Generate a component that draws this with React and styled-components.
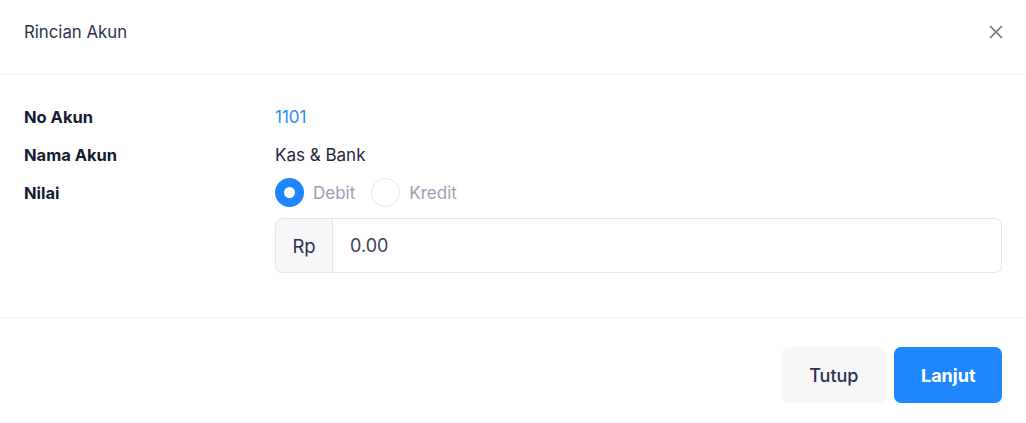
import { useState } from 'react';
import styled, { createGlobalStyle } from 'styled-components';

const GlobalStyle = createGlobalStyle`
  * { box-sizing: border-box; }
  body {
    margin: 0;
    background: #fff;
    font-family: Inter, "Noto Sans", "Liberation Sans", sans-serif;
  }
`;

function App() {
  const [type, setType] = useState('debit');
  const [amount, setAmount] = useState('0.00');

  return (
    <>
      <GlobalStyle />
      <Modal>
        <Header>
          <Title>Rincian Akun</Title>
          <CloseButton aria-label="Tutup">
            <svg width="14" height="14" viewBox="0 0 14 14" fill="none">
              <path d="M1.5 1.5l11 11M12.5 1.5l-11 11" stroke="#6b6f78" strokeWidth="1.5" strokeLinecap="round" />
            </svg>
          </CloseButton>
        </Header>

        <Body>
          <Label>No Akun</Label>
          <Value $link>1101</Value>

          <Label>Nama Akun</Label>
          <Value>Kas &amp; Bank</Value>

          <Label>Nilai</Label>
          <div>
            <RadioGroup>
              <RadioOption onClick={() => setType('debit')}>
                <RadioDot $checked={type === 'debit'} />
                Debit
              </RadioOption>
              <RadioOption onClick={() => setType('kredit')}>
                <RadioDot $checked={type === 'kredit'} />
                Kredit
              </RadioOption>
            </RadioGroup>
            <InputGroup>
              <Addon>Rp</Addon>
              <AmountInput value={amount} onChange={(e) => setAmount(e.target.value)} />
            </InputGroup>
          </div>
        </Body>

        <Footer>
          <Button>Tutup</Button>
          <Button $primary>Lanjut</Button>
        </Footer>
      </Modal>
    </>
  );
}

export default App;

const Modal = styled.div`
  width: 100%;
  background: #fff;
`;

const Header = styled.div`
  display: flex;
  align-items: center;
  justify-content: space-between;
  padding: 22px 23px 32px 24px;
  border-bottom: 1px solid #eef0f3;
`;

const Title = styled.h2`
  margin: 0;
  font-size: 16.8px;
  line-height: 20px;
  font-weight: 400;
  color: #2b3352;
`;

const CloseButton = styled.button`
  display: flex;
  padding: 0;
  border: none;
  background: none;
  cursor: pointer;
`;

const Body = styled.div`
  display: grid;
  grid-template-columns: 251px 1fr;
  row-gap: 16px;
  padding: 31px 24px 44px 24px;
  border-bottom: 1px solid #eef0f3;
`;

const Label = styled.div`
  font-size: 16.5px;
  line-height: 22px;
  font-weight: 700;
  color: #141b34;
`;

const Value = styled.div`
  font-size: 17px;
  line-height: 22px;
  color: ${(p) => (p.$link ? '#2f8af5' : '#1f2640')};
`;

const RadioGroup = styled.div`
  display: flex;
  align-items: center;
  gap: 16px;
  margin-top: -4px;
`;

const RadioOption = styled.label`
  display: flex;
  align-items: center;
  gap: 9px;
  font-size: 17px;
  color: #9aa0b4;
  cursor: pointer;
`;

const RadioDot = styled.span`
  width: 29px;
  height: 29px;
  border-radius: 50%;
  background: #fff;
  border: ${(p) => (p.$checked ? '9px solid #1f87fd' : '1.5px solid #e6e8ee')};
`;

const InputGroup = styled.div`
  display: flex;
  margin-top: 11px;
  height: 55px;
`;

const Addon = styled.div`
  display: flex;
  align-items: center;
  justify-content: center;
  width: 58px;
  background: #f7f7f9;
  border: 1.5px solid #e3e6ee;
  border-radius: 7px 0 0 7px;
  font-size: 18.5px;
  color: #2b3150;
`;

const AmountInput = styled.input`
  flex: 1;
  min-width: 0;
  border: 1.5px solid #e3e6ee;
  border-left: none;
  border-radius: 0 7px 7px 0;
  padding: 0 17px;
  font-family: inherit;
  font-size: 18px;
  color: #3a4157;
  outline: none;
`;

const Footer = styled.div`
  display: flex;
  justify-content: flex-end;
  gap: 9px;
  padding: 29px 24px 20px;
`;

const Button = styled.button`
  height: 56px;
  padding: 0 ${(p) => (p.$primary ? '26.5px' : '27px')};
  border: none;
  border-radius: 7px;
  font-family: inherit;
  font-size: 18px;
  font-weight: ${(p) => (p.$primary ? 700 : 500)};
  background: ${(p) => (p.$primary ? '#1f87fd' : '#f7f7f8')};
  color: ${(p) => (p.$primary ? '#fff' : '#2b3150')};
  cursor: pointer;
`;
